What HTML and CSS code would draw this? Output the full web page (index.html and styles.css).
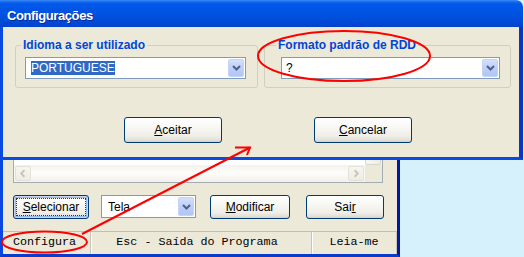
FILE: index.html
```html
<!DOCTYPE html>
<html lang="pt">
<head>
<meta charset="utf-8">
<title>Configurações</title>
<link rel="stylesheet" href="styles.css">
</head>
<body>
<div class="desktop">

  <div class="win-main">
    <div class="listbox">
      <div class="list-body">
        <div class="list-rows"></div>
        <div class="vscroll"><div class="vbtn"></div></div>
      </div>
      <div class="hscroll-row">
        <div class="hscroll">
          <div class="sbtn"><svg width="15" height="15" viewBox="0 0 15 15"><path d="M9 4 L5.5 7.5 L9 11" fill="none" stroke="#c8c5b5" stroke-width="2"/></svg></div>
          <div class="track"></div>
          <div class="sbtn"><svg width="15" height="15" viewBox="0 0 15 15"><path d="M6 4 L9.5 7.5 L6 11" fill="none" stroke="#c8c5b5" stroke-width="2"/></svg></div>
        </div>
        <div class="sizebox"></div>
      </div>
    </div>

    <div class="btn-row">
      <button class="xpbtn btn-sel default"><span class="focus"><u>S</u>elecionar</span></button>
      <div class="combo combo-tela">
        <span class="combo-text">Tela</span>
        <span class="dd"><svg width="9" height="6" viewBox="0 0 9 6"><path d="M1 1 L4.5 4.5 L8 1" fill="none" stroke="#4d6185" stroke-width="2"/></svg></span>
      </div>
      <button class="xpbtn btn-mod"><u>M</u>odificar</button>
      <button class="xpbtn btn-sair">Sai<u>r</u></button>
    </div>

    <div class="status">
      <div class="panel p1">Configura</div>
      <div class="panel p2">Esc - Saída do Programa</div>
      <div class="panel p3">Leia-me</div>
    </div>
  </div>

  <div class="dialog">
    <div class="titlebar">Configurações</div>
    <div class="dlg-body">
      <div class="groups">
        <fieldset class="group g1">
          <legend class="lg1">Idioma a ser utilizado</legend>
          <div class="combo combo-lang">
            <span class="combo-text"><span class="sel">PORTUGUESE</span></span>
            <span class="dd"><svg width="9" height="6" viewBox="0 0 9 6"><path d="M1 1 L4.5 4.5 L8 1" fill="none" stroke="#4d6185" stroke-width="2"/></svg></span>
          </div>
        </fieldset>
        <fieldset class="group g2">
          <legend class="lg2">Formato padrão de RDD</legend>
          <div class="combo combo-rdd">
            <span class="combo-text">?</span>
            <span class="dd"><svg width="9" height="6" viewBox="0 0 9 6"><path d="M1 1 L4.5 4.5 L8 1" fill="none" stroke="#4d6185" stroke-width="2"/></svg></span>
          </div>
        </fieldset>
      </div>
      <div class="dlg-buttons">
        <button class="xpbtn btn-ok"><u>A</u>ceitar</button>
        <button class="xpbtn btn-cancel"><u>C</u>ancelar</button>
      </div>
    </div>
  </div>

  <svg class="annot" width="524" height="257" viewBox="0 0 524 257">
    <g fill="none" stroke="#ff0000" stroke-width="2">
      <ellipse cx="44.5" cy="242" rx="42.5" ry="10.5"/>
      <ellipse cx="344" cy="56" rx="86" ry="25"/>
      <line x1="82" y1="234" x2="250" y2="147.5"/>
      <polyline points="235,147.5 250,147.5 247,155"/>
    </g>
  </svg>
</div>
</body>
</html>
```

FILE: styles.css
```css
* { box-sizing: border-box; }
html, body { margin: 0; padding: 0; }
body {
  width: 524px;
  height: 257px;
  overflow: hidden;
  background: #d6f1fc;
  font-family: "Liberation Sans", Arial, sans-serif;
  font-size: 12px;
  color: #000;
}
.desktop {
  position: relative;
  width: 524px;
  height: 257px;
  background: #d6f1fc;
}

/* ---------- main window (behind) ---------- */
.win-main {
  position: absolute;
  left: 0;
  top: 100px;
  width: 400px;
  height: 157px;
  display: flex;
  flex-direction: column;
  background: #ece9d8;
  border-left: 3px solid #0a46e0;
  border-right: 3px solid #0019a0;
  border-bottom: 3px solid #0a3ccc;
}
.listbox {
  margin-left: 10px;
  width: 370px;
  height: 83px;
  border: 1px solid #a5acb2;
  background: #fff;
  display: flex;
  flex-direction: column;
}
.list-body { flex: 1; display: flex; }
.list-rows { flex: 1; }
.vscroll {
  width: 17px;
  display: flex;
  flex-direction: column;
  justify-content: flex-end;
  background: #f4f3ee;
}
.vbtn {
  height: 16px;
  margin: 0 1px 0 0;
  border: 1px solid #d8d6c8;
  border-radius: 2px;
  background: linear-gradient(to right, #f8f8f4, #eeede6);
}
.hscroll-row { height: 17px; display: flex; }
.hscroll {
  flex: 1;
  display: flex;
  padding: 1px 1px 1px 1px;
  background: linear-gradient(to bottom, #f3f1ea, #fdfdfb 45%, #f2f1eb);
}
.sbtn {
  width: 16px;
  height: 15px;
  border: 1px solid #e4e2d6;
  border-radius: 2px;
  background: linear-gradient(to bottom, #f6f5f0, #eeede5);
  display: flex;
  align-items: center;
  justify-content: center;
}
.track { flex: 1; }
.sizebox { width: 17px; background: #ece9d8; }

.btn-row {
  display: flex;
  margin-top: 12px;
  padding-left: 10px;
  height: 24px;
}
.xpbtn {
  height: 24px;
  padding: 0;
  border: 1px solid #003c74;
  border-radius: 3px;
  background: linear-gradient(to bottom, #ffffff 0%, #f8f8f5 35%, #efeee8 75%, #e3e0d5 92%, #d6d0c2 100%);
  font-family: "Liberation Sans", Arial, sans-serif;
  font-size: 12px;
  color: #000;
  display: flex;
  align-items: center;
  justify-content: center;
}
.btn-sel { width: 76px; margin-right: 12px; box-shadow: inset 0 0 0 1px #c6d6f7, inset 0 0 0 2px #9db6ea; }
.btn-sel .focus {
  display: flex;
  align-items: center;
  justify-content: center;
  width: 70px;
  height: 18px;
  border: 1px dotted #333;
}
.btn-mod { width: 80px; margin-right: 16px; margin-left: 14px; }
.btn-sair { width: 78px; }

.combo {
  height: 22px;
  border: 1px solid #7f9db9;
  background: #fff;
  display: flex;
  align-items: center;
  justify-content: space-between;
}
.combo-text { line-height: 14px; }
.dd {
  width: 16px;
  height: 18px;
  margin-right: 1px;
  border: 1px solid #c3d3fb;
  border-radius: 2px;
  background: linear-gradient(to bottom, #d3dffb, #bdcff8 50%, #b1c6f6);
  display: flex;
  align-items: center;
  justify-content: center;
}
.combo-tela { width: 95px; height: 23px; }
.combo-tela .combo-text { padding-left: 6px; }
.combo-tela .dd { height: 19px; }

.status {
  margin-top: 12px;
  height: 23px;
  display: flex;
  border-top: 1px solid #c2bfae;
  font-family: "Liberation Mono", "Courier New", monospace;
  font-size: 11.7px;
  line-height: 21px;
}
.panel {
  border-right: 1px solid #c8c5b4;
  box-shadow: inset 1px 0 0 #ffffff;
  white-space: nowrap;
}
.p1 { width: 88px; padding-left: 10px; box-shadow: none; }
.p2 { width: 221px; text-align: center; padding-right: 8px; }
.p3 { flex: 1; text-align: center; }

/* ---------- dialog (front) ---------- */
.dialog {
  position: absolute;
  left: 0;
  top: 0;
  width: 523px;
  height: 160px;
  display: flex;
  flex-direction: column;
  border-top-right-radius: 7px;
  overflow: hidden;
}
.titlebar {
  height: 27px;
  padding: 5px 0 0 7px;
  line-height: 22px;
  background: linear-gradient(to bottom, #3d8cf6 0px, #1367ef 2px, #0259e9 4px, #0055e5 9px, #0052e0 15px, #004bd8 21px, #0043cd 27px);
  color: #fff;
  font-family: "Liberation Sans", Arial, sans-serif;
  font-weight: bold;
  font-size: 13px;
  letter-spacing: -0.4px;
  text-shadow: 1px 1px 0 #0a2a9a;
}
.dlg-body {
  flex: 1;
  background: #ece9d8;
  border-left: 3px solid #0a4ae0;
  border-right: 4px solid #0837c4;
  border-bottom: 3px solid #0a4ae2;
}
.groups {
  display: flex;
  margin-top: 11px;
  padding-left: 12px;
}
.group {
  margin: 0;
  padding: 5px 0 8px 0;
  border: 1px solid #d0d0bf;
  border-radius: 3px;
  min-width: 0;
}
.group legend {
  padding: 0 2px;
  font-weight: bold;
  font-size: 12px;
  line-height: 14px;
  color: #0046d5;
}
.g1 { width: 243px; }
.g2 { width: 247px; margin-left: 6px; }
.lg1 { margin-left: 5px; }
.lg2 { margin-left: 11px; }
.combo-lang { margin-left: 9px; width: 221px; }
.combo-lang .combo-text { padding-left: 5px; }
.sel { background: #316ac5; color: #fff; display: inline-block; line-height: 14px; }
.combo-rdd { margin-left: 16px; width: 219px; }
.combo-rdd .combo-text { padding-left: 4px; }

.dlg-buttons {
  display: flex;
  margin-top: 29px;
  padding-left: 121px;
}
.btn-ok, .btn-cancel { width: 98px; height: 26px; }
.btn-cancel { margin-left: 92px; }

.annot {
  position: absolute;
  left: 0;
  top: 0;
  pointer-events: none;
}
```
